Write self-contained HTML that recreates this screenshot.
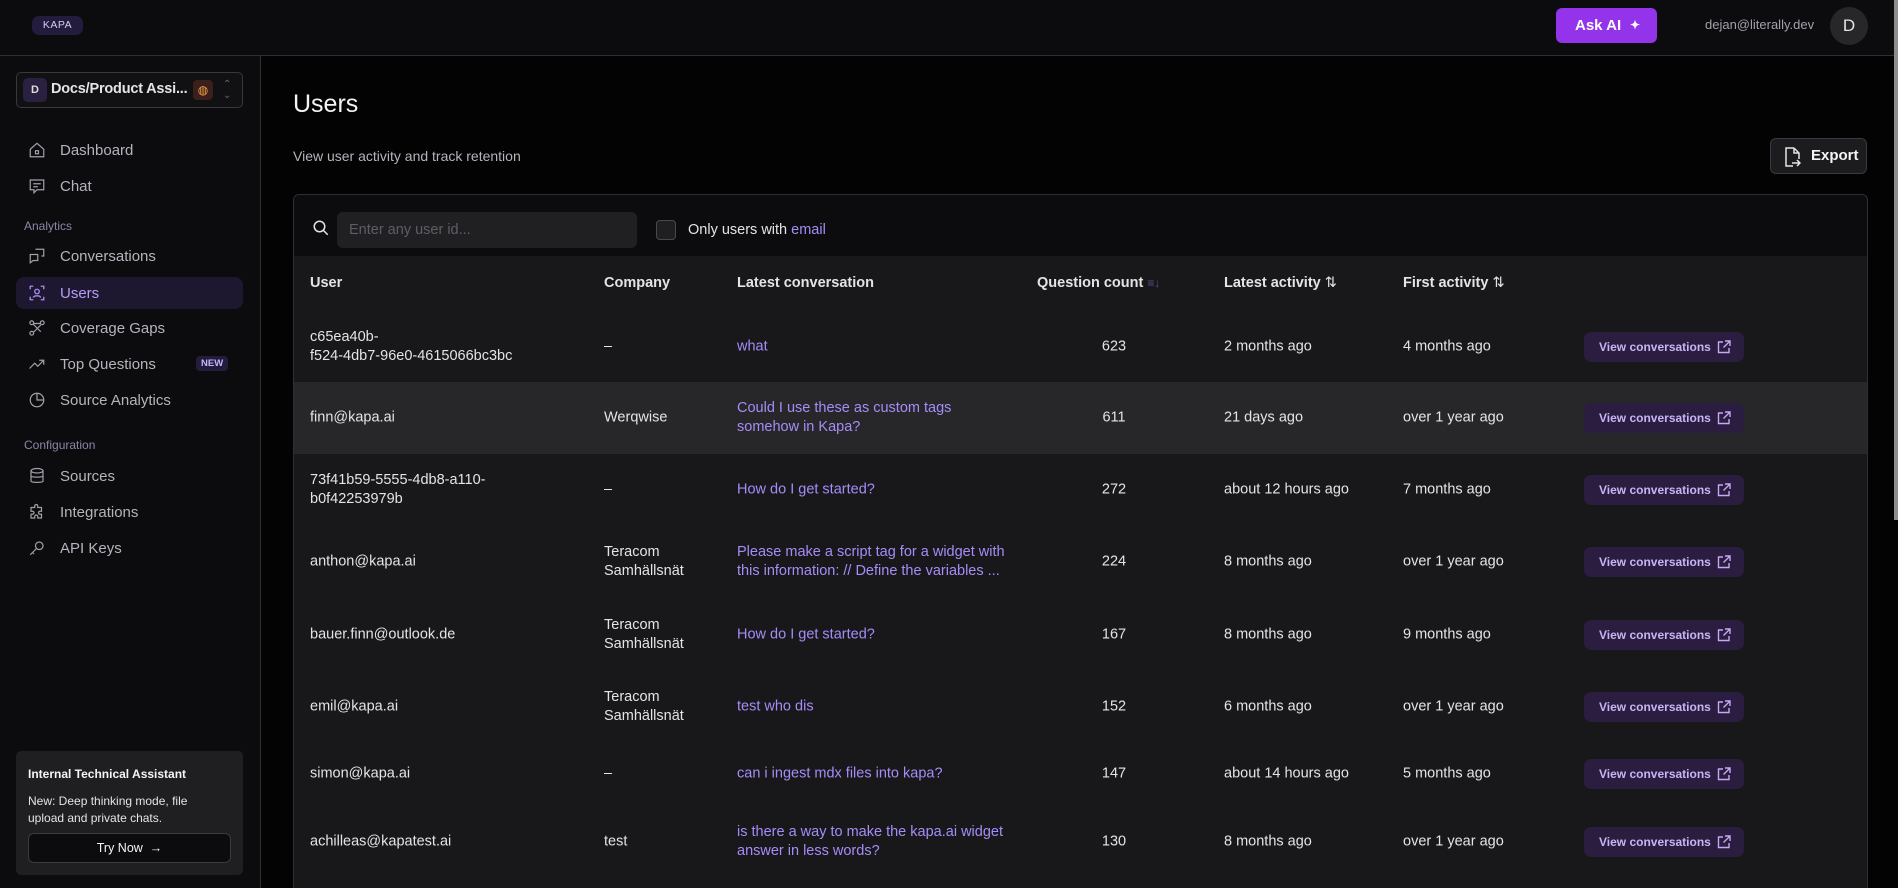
<!DOCTYPE html>
<html><head><meta charset="utf-8"><style>
*{box-sizing:border-box;margin:0;padding:0}
html,body{width:1898px;height:888px;overflow:hidden}
body{background:#030303;font-family:"Liberation Sans",sans-serif;color:#e4e4e7;position:relative}
.abs{position:absolute}
.top{left:0;top:0;width:1898px;height:56px;background:#0c0c0e;border-bottom:1px solid #2e2e33}
.side{left:0;top:56px;width:261px;height:832px;background:#0c0c0e;border-right:1px solid #2e2e33}
.nav{position:absolute;left:16px;width:227px;height:32px;display:flex;align-items:center;padding-left:44px;font-size:15px;color:#b4b4bd;border-radius:8px}
.nav svg{position:absolute;left:12px;top:7px}
.lbl{position:absolute;left:24px;font-size:12px;color:#8a86a8}
.card{left:293px;top:194px;width:1575px;height:694px;border:1px solid #2e2e33;border-bottom:none;border-radius:6px 6px 0 0;background:#18181b;overflow:hidden}
.cell{position:absolute;font-size:14.5px;line-height:19px;transform:translateY(-50%)}
.lnk{color:#a68cf7}
.btn{position:absolute;left:1290px;width:160px;height:30px;background:#2b1d3f;border-radius:7px;color:#c8b4f5;font-size:12px;font-weight:bold;display:flex;align-items:center;padding-left:15px;transform:translateY(-50%)}
.btn svg{position:absolute;right:13px;top:8px}
.hd{position:absolute;top:27px;font-size:14.5px;font-weight:bold;transform:translateY(-50%);color:#e4e4e7}
</style></head><body>
<div class="abs top">
 <div class="abs" style="left:32px;top:16px;width:51px;height:19px;background:#231c3c;border-radius:7px;font-size:10.5px;color:#d4cdf5;text-align:center;line-height:19px;letter-spacing:.5px">KAPA</div>
 <div class="abs" style="left:1556px;top:8px;width:101px;height:35px;background:#9333ea;border-radius:6px;color:#fff;font-weight:bold;font-size:15px;line-height:35px;padding-left:19px">Ask AI<span style="position:absolute;left:74px;top:0;font-size:12px">✦</span></div>
 <div class="abs" style="left:1705px;top:17px;font-size:13px;color:#a1a1aa">dejan@literally.dev</div>
 <div class="abs" style="left:1830px;top:7px;width:38px;height:38px;border-radius:50%;background:#27272a;color:#e4e4e7;text-align:center;line-height:38px;font-size:17px">D</div>
</div>
<div class="abs" style="left:1894px;top:0;width:4px;height:520px;background:#8d8d8d"></div>
<div class="abs side">
 <div class="abs" style="left:16px;top:16px;width:227px;height:36px;border:1px solid #38383d;border-radius:5px;background:#111114">
  <div class="abs" style="left:6px;top:5px;width:24px;height:24px;border-radius:5px;background:#2a2140;color:#ddd;font-size:11px;font-weight:bold;text-align:center;line-height:24px">D</div>
  <div class="abs" style="left:34px;top:8px;font-size:14.5px;font-weight:bold;color:#e4e4e7;letter-spacing:-.2px">Docs/Product Assi...</div>
  <div class="abs" style="left:176px;top:7px;width:20px;height:20px;border-radius:4px;background:#3a1f1a;color:#f5a34a;font-size:12px;text-align:center;line-height:20px">◍</div>
  <div class="abs" style="left:206px;top:6px;font-size:10px;color:#666;line-height:11px">⌃<br>⌄</div>
 </div>
 <div class="nav" style="top:78px"><svg width="18" height="18" viewBox="0 0 24 24" fill="none" stroke="#a1a1aa" stroke-width="1.6"><path d="M3 11l9-8 9 8v10H3z"/><rect x="10" y="13" width="4" height="4"/></svg>Dashboard</div>
 <div class="nav" style="top:114px"><svg width="18" height="18" viewBox="0 0 24 24" fill="none" stroke="#a1a1aa" stroke-width="1.6"><path d="M3 4h18v13h-9l-4 4v-4H3z"/><path d="M7 9h10M7 13h6"/></svg>Chat</div>
 <div class="lbl" style="top:163px">Analytics</div>
 <div class="nav" style="top:184px"><svg width="18" height="18" viewBox="0 0 24 24" fill="none" stroke="#a1a1aa" stroke-width="1.6"><path d="M3 10h10v8H7l-4 3zM10 3h11v9h-3"/></svg>Conversations</div>
 <div class="nav" style="top:221px;background:#1e1730;color:#b79cf7"><svg width="18" height="18" viewBox="0 0 24 24" fill="none" stroke="#a889f5" stroke-width="1.8"><path d="M3 7V3h4M17 3h4v4M21 17v4h-4M7 21H3v-4"/><circle cx="12" cy="10" r="3"/><path d="M7 18c1-3 9-3 10 0"/></svg>Users</div>
 <div class="nav" style="top:256px"><svg width="18" height="18" viewBox="0 0 24 24" fill="none" stroke="#a1a1aa" stroke-width="1.6"><circle cx="5" cy="5" r="2.5"/><circle cx="19" cy="5" r="2.5"/><circle cx="5" cy="19" r="2.5"/><path d="M7 6l10 0M7 7l10 10M7 18l10-10"/></svg>Coverage Gaps</div>
 <div class="nav" style="top:292px"><svg width="18" height="18" viewBox="0 0 24 24" fill="none" stroke="#a1a1aa" stroke-width="1.6"><path d="M2 18l7-7 4 4 8-8M15 7h6v6"/></svg>Top Questions<span style="position:absolute;left:180px;top:8px;background:#231c3c;color:#c4b5fd;font-size:9.5px;font-weight:bold;padding:2px 5px;border-radius:4px">NEW</span></div>
 <div class="nav" style="top:328px"><svg width="18" height="18" viewBox="0 0 24 24" fill="none" stroke="#a1a1aa" stroke-width="1.6"><circle cx="12" cy="12" r="9"/><path d="M12 3v9h9"/></svg>Source Analytics</div>
 <div class="lbl" style="top:382px">Configuration</div>
 <div class="nav" style="top:404px"><svg width="18" height="18" viewBox="0 0 24 24" fill="none" stroke="#a1a1aa" stroke-width="1.6"><ellipse cx="12" cy="5" rx="8" ry="3"/><path d="M4 5v14c0 2 16 2 16 0V5M4 12c0 2 16 2 16 0"/></svg>Sources</div>
 <div class="nav" style="top:440px"><svg width="18" height="18" viewBox="0 0 24 24" fill="none" stroke="#a1a1aa" stroke-width="1.6"><path d="M9 4a2 2 0 014 0v2h5v5h-2a2 2 0 000 4h2v5h-5v-2a2 2 0 00-4 0v2H4v-5h2a2 2 0 000-4H4V6h5z"/></svg>Integrations</div>
 <div class="nav" style="top:476px"><svg width="18" height="18" viewBox="0 0 24 24" fill="none" stroke="#a1a1aa" stroke-width="1.6"><circle cx="15" cy="9" r="5"/><path d="M11 13l-8 8M6 18l2 2"/></svg>API Keys</div>
 <div class="abs" style="left:16px;top:695px;width:227px;height:124px;background:#1f1f22;border-radius:5px">
  <div class="abs" style="left:12px;top:16px;font-size:12px;font-weight:bold;color:#f4f4f5">Internal Technical Assistant</div>
  <div class="abs" style="left:12px;top:42px;font-size:12px;line-height:17px;color:#e4e4e7">New: Deep thinking mode, file<br>upload and private chats.</div>
  <div class="abs" style="left:12px;top:82px;width:203px;height:30px;border:1px solid #3a3a40;border-radius:6px;background:#0c0c0e;text-align:center;line-height:28px;font-size:12.5px;color:#f4f4f5">Try Now &nbsp;→</div>
 </div>
</div>
<div class="abs" style="left:293px;top:90px;font-size:25px;color:#f4f4f5">Users</div>
<div class="abs" style="left:293px;top:148px;font-size:14px;color:#b4b4bd">View user activity and track retention</div>
<div class="abs" style="left:1770px;top:138px;width:97px;height:36px;border:1px solid #3a3a40;border-radius:6px;background:#1c1c1f;font-size:15px;font-weight:bold;line-height:34px;padding-left:40px;color:#f4f4f5"><svg class="abs" style="left:12px;top:8px" width="18" height="20" viewBox="0 0 18 20" fill="none" stroke="#e4e4e7" stroke-width="1.5"><path d="M11 1H3v18h7M11 1l5 5v6M11 1v5h5M9 16h8M14 13l3 3-3 3"/></svg>Export</div>
<div class="abs card">
 <div class="abs" style="left:0;top:0;width:100%;height:61px;background:#0c0c0e"></div>
 <svg class="abs" style="left:18px;top:24px" width="18" height="18" viewBox="0 0 24 24" fill="none" stroke="#e4e4e7" stroke-width="2"><circle cx="10" cy="10" r="7"/><path d="M15 15l6 6"/></svg>
 <div class="abs" style="left:43px;top:17px;width:300px;height:36px;background:#202023;border-radius:6px;font-size:14.5px;color:#5d5d66;line-height:36px;padding-left:12px">Enter any user id...</div>
 <div class="abs" style="left:362px;top:25px;width:20px;height:20px;border:1px solid #48484f;border-radius:4px;background:#1f1f22"></div>
 <div class="abs" style="left:394px;top:27px;font-size:14.5px;color:#e4e4e7">Only users with <span class="lnk">email</span></div>
 <div class="abs" style="left:0;top:61px;width:100%;height:58px">
  <div class="hd" style="left:16px">User</div><div class="hd" style="left:310px">Company</div><div class="hd" style="left:443px">Latest conversation</div>
  <div class="hd" style="left:743px">Question count <span style="color:#5b4a8a;font-size:12px">≡↓</span></div>
  <div class="hd" style="left:930px">Latest activity <span style="font-weight:normal">⇅</span></div>
  <div class="hd" style="left:1109px">First activity <span style="font-weight:normal">⇅</span></div>
 </div>
 <div class="abs" style="left:0;top:187px;width:100%;height:72px;background:#27272a"></div>
 <div id="rows"></div>
</div>
<script>
var R=[[152,"c65ea40b-<br>f524-4db7-96e0-4615066bc3bc","–","what","623","2 months ago","4 months ago"],
[223,"finn@kapa.ai","Werqwise","Could I use these as custom tags<br>somehow in Kapa?","611","21 days ago","over 1 year ago"],
[295,"73f41b59-5555-4db8-a110-<br>b0f42253979b","–","How do I get started?","272","about 12 hours ago","7 months ago"],
[367,"anthon@kapa.ai","Teracom<br>Samhällsnät","Please make a script tag for a widget with<br>this information: // Define the variables ...","224","8 months ago","over 1 year ago"],
[440,"bauer.finn@outlook.de","Teracom<br>Samhällsnät","How do I get started?","167","8 months ago","9 months ago"],
[512,"emil@kapa.ai","Teracom<br>Samhällsnät","test who dis","152","6 months ago","over 1 year ago"],
[579,"simon@kapa.ai","–","can i ingest mdx files into kapa?","147","about 14 hours ago","5 months ago"],
[647,"achilleas@kapatest.ai","test","is there a way to make the kapa.ai widget<br>answer in less words?","130","8 months ago","over 1 year ago"]];
var h="";R.forEach(function(r){var y=r[0];
h+='<div class="cell" style="left:16px;top:'+y+'px">'+r[1]+'</div>';
h+='<div class="cell" style="left:310px;top:'+y+'px">'+r[2]+'</div>';
h+='<div class="cell lnk" style="left:443px;top:'+y+'px">'+r[3]+'</div>';
h+='<div class="cell" style="left:780px;width:80px;text-align:center;top:'+y+'px">'+r[4]+'</div>';
h+='<div class="cell" style="left:930px;top:'+y+'px">'+r[5]+'</div>';
h+='<div class="cell" style="left:1109px;top:'+y+'px">'+r[6]+'</div>';
h+='<div class="btn" style="top:'+y+'px">View conversations<svg width="14" height="14" viewBox="0 0 14 14" fill="none" stroke="#c8a8f5" stroke-width="1.4"><path d="M6 2H1.5v10.5H12V8M8 1h5v5M13 1L6.5 7.5"/></svg></div>';});
document.getElementById("rows").innerHTML=h;
</script>
</body></html>
